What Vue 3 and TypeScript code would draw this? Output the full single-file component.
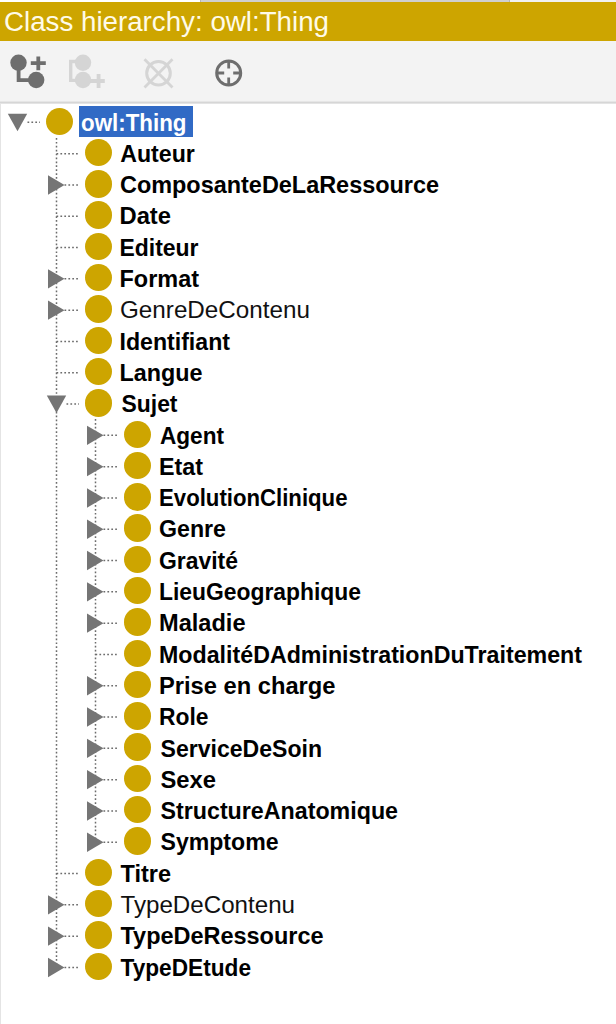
<script setup lang="ts">
interface ClassNode {
  label: string
  depth: number
  x: number
  length: number
  light?: boolean
  state?: 'open' | 'closed'
}

const ROW = 31.3
const STEP = 39

const nodes: ClassNode[] = [
  { label: 'owl:Thing', depth: 0, x: 81, length: 105.5, state: 'open' },
  { label: 'Auteur', depth: 1, x: 120.3, length: 74.5 },
  { label: 'ComposanteDeLaRessource', depth: 1, x: 120, length: 319, state: 'closed' },
  { label: 'Date', depth: 1, x: 119.5, length: 51.5 },
  { label: 'Editeur', depth: 1, x: 119.5, length: 79 },
  { label: 'Format', depth: 1, x: 119.5, length: 79.5, state: 'closed' },
  { label: 'GenreDeContenu', depth: 1, x: 120, length: 190, light: true, state: 'closed' },
  { label: 'Identifiant', depth: 1, x: 119.5, length: 110.5 },
  { label: 'Langue', depth: 1, x: 119.5, length: 83 },
  { label: 'Sujet', depth: 1, x: 121.5, length: 56, state: 'open' },
  { label: 'Agent', depth: 2, x: 160, length: 64, state: 'closed' },
  { label: 'Etat', depth: 2, x: 159, length: 44, state: 'closed' },
  { label: 'EvolutionClinique', depth: 2, x: 159, length: 188.5, state: 'closed' },
  { label: 'Genre', depth: 2, x: 159, length: 67, state: 'closed' },
  { label: 'Gravité', depth: 2, x: 159, length: 79, state: 'closed' },
  { label: 'LieuGeographique', depth: 2, x: 159, length: 202, state: 'closed' },
  { label: 'Maladie', depth: 2, x: 159, length: 86.5, state: 'closed' },
  { label: 'ModalitéDAdministrationDuTraitement', depth: 2, x: 159, length: 423 },
  { label: 'Prise en charge', depth: 2, x: 159, length: 176.5, state: 'closed' },
  { label: 'Role', depth: 2, x: 159, length: 49.5, state: 'closed' },
  { label: 'ServiceDeSoin', depth: 2, x: 160.5, length: 161.5, state: 'closed' },
  { label: 'Sexe', depth: 2, x: 160.5, length: 55.5, state: 'closed' },
  { label: 'StructureAnatomique', depth: 2, x: 160.5, length: 237.5, state: 'closed' },
  { label: 'Symptome', depth: 2, x: 160.5, length: 118, state: 'closed' },
  { label: 'Titre', depth: 1, x: 120.5, length: 50.5 },
  { label: 'TypeDeContenu', depth: 1, x: 120.5, length: 174.5, light: true, state: 'closed' },
  { label: 'TypeDeRessource', depth: 1, x: 120.5, length: 203, state: 'closed' },
  { label: 'TypeDEtude', depth: 1, x: 120.5, length: 130.5, state: 'closed' },
]

const middle = (row: number) => (row + 0.5) * ROW + 0.7
const labelLeft = (n: ClassNode) => 79 + n.depth * STEP

function branchStart(n: ClassNode): number {
  const axis = 17.5 + n.depth * STEP
  if (n.state === 'open') return axis + 10
  if (n.state === 'closed') return axis + 8
  return axis
}
</script>

<template>
  <main class="panel">
    <div class="tabs"><span class="tab active"></span><span class="tab"></span><span class="rest"></span></div>
    <header class="title">
      <svg width="616" height="39">
        <text x="4" y="29.2" textLength="325" lengthAdjust="spacingAndGlyphs">Class hierarchy: owl:Thing</text>
      </svg>
    </header>
    <div class="toolbar">
      <svg width="260" height="60" viewBox="0 41 260 60" fill="none">
        <g class="on">
          <path d="M18.6 62.7V80.2H36" stroke-width="3.8" />
          <path d="M30.8 63.2H45.8M38.3 56.6V70.2" stroke-width="3.8" />
          <circle class="dot" cx="18.5" cy="62.7" r="8.2" />
          <circle class="dot" cx="36.2" cy="80" r="8.2" />
        </g>
        <g class="off">
          <path d="M83 61.5H70.7V80.4H83" stroke-width="3.4" />
          <path d="M90 81H104.8M98.6 74V88" stroke-width="3.8" />
          <circle class="dot" cx="83" cy="62.7" r="8.2" />
          <circle class="dot" cx="83" cy="80" r="8.2" />
        </g>
        <g class="off">
          <circle cx="158.5" cy="73.2" r="11.8" stroke-width="3" />
          <path d="M144.5 59.2L172.5 87.4M172.5 59.2L144.5 87.4" stroke-width="2.8" />
        </g>
        <g class="on">
          <circle cx="228.7" cy="73" r="12" stroke-width="3" />
          <path d="M228.7 61V68.5M228.7 77.5V85M216.7 73H224.2M233.2 73H240.7" stroke-width="2.8" />
        </g>
      </svg>
    </div>
    <section class="tree">
      <svg class="guides" width="616" height="890">
        <g class="dots">
          <line x1="56.5" y1="32" x2="56.5" :y2="middle(27)" />
          <line x1="95.5" :y1="middle(9) + 15" x2="95.5" :y2="middle(23)" />
          <line
            v-for="(n, i) in nodes"
            :key="i"
            :x1="branchStart(n)"
            :x2="40 + n.depth * STEP"
            :y1="middle(i)"
            :y2="middle(i)"
          />
        </g>
        <template v-for="(n, i) in nodes" :key="i">
          <path
            v-if="n.state"
            class="arrow"
            :transform="`translate(${17.5 + n.depth * STEP} ${middle(i)})`"
            :d="n.state === 'open' ? 'M-9.7 -8.5H9.7L0 9Z' : 'M-8.5 -9.7V9.7L8 0Z'"
          />
        </template>
      </svg>
      <ul>
        <li v-for="(n, i) in nodes" :key="i" :style="{ paddingLeft: 46 + n.depth * STEP + 'px' }">
          <i class="bullet"></i>
          <span class="label" :class="{ selected: i === 0, light: n.light }">
            <svg :width="n.length + 30" height="31.3">
              <text
                :x="n.x - labelLeft(n)"
                y="25.3"
                :textLength="n.length"
                lengthAdjust="spacingAndGlyphs"
              >{{ n.label }}</text>
            </svg>
          </span>
        </li>
      </ul>
    </section>
  </main>
</template>

<style>
body {
  background: #fff;
}
</style>

<style scoped>
.panel {
  width: 616px;
  height: 1024px;
  display: flex;
  flex-direction: column;
  overflow: hidden;
  font-family: "Liberation Sans", Arial, sans-serif;
}
svg {
  display: block;
  overflow: visible;
}
.tabs {
  display: flex;
  height: 2px;
  background: #f1f1f1;
}
.tab {
  width: 308px;
  background: #cfcfcf;
  border-right: 1px solid #b5b5b5;
}
.tab.active {
  width: 200px;
  background: #fff;
}
.title {
  height: 39px;
  background: #cda500;
}
.title text {
  font-size: 26.8px;
  fill: #fffbe8;
}
.toolbar {
  height: 60px;
  background: #f3f3f3;
  border-bottom: 1px solid #e6e6e6;
}
.on {
  stroke: #6e6e6e;
}
.on .dot {
  fill: #6e6e6e;
  stroke: none;
}
.off {
  stroke: #d5d5d5;
}
.off .dot {
  fill: #d5d5d5;
  stroke: none;
}
.tree {
  position: relative;
  flex: 1;
  border-top: 1px solid #d6d6d6;
  box-shadow: inset 1px 1px #e4e4e4;
  padding-top: 2.6px;
}
.guides {
  position: absolute;
  left: 0;
  top: 2.6px;
}
.dots line {
  stroke: #6c6c6c;
  stroke-width: 1.5;
  stroke-dasharray: 1.7 2.21;
}
.arrow {
  fill: #757575;
}
ul {
  margin: 0;
  padding: 0;
  list-style: none;
}
li {
  display: flex;
  align-items: center;
  height: 31.3px;
}
.bullet {
  width: 27.4px;
  height: 27.4px;
  margin-right: 5.6px;
  border-radius: 50%;
  background: #cda500;
}
.label {
  height: 31.3px;
}
.label text {
  font-size: 24.6px;
  font-weight: 700;
  fill: #000;
}
.light text {
  font-weight: 400;
  fill: #111;
}
.selected {
  width: 114px;
  background: #316ac5;
}
.selected text {
  fill: #fff;
}
</style>
